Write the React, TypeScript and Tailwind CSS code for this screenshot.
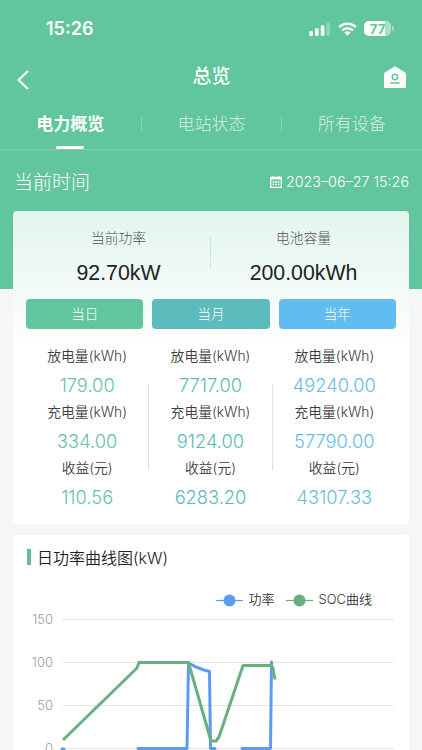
import React from "react";

const periods = [
  {
    label: "当日",
    button: "bg-[#61c59d]",
    text: "text-[#64c3a0]",
    rows: [
      { label: "放电量(kWh)", value: "179.00" },
      { label: "充电量(kWh)", value: "334.00" },
      { label: "收益(元)", value: "110.56" },
    ],
  },
  {
    label: "当月",
    button: "bg-[#5bbbbd]",
    text: "text-[#5bbcb6]",
    rows: [
      { label: "放电量(kWh)", value: "7717.00" },
      { label: "充电量(kWh)", value: "9124.00" },
      { label: "收益(元)", value: "6283.20" },
    ],
  },
  {
    label: "当年",
    button: "bg-[#61bcf0]",
    text: "text-[#6abbe4]",
    rows: [
      { label: "放电量(kWh)", value: "49240.00" },
      { label: "充电量(kWh)", value: "57790.00" },
      { label: "收益(元)", value: "43107.33" },
    ],
  },
];

export default function App() {
  return (
    <div className="h-[750px] w-[422px] overflow-hidden bg-[#f4f6f8] font-['Inter','Noto_Sans_CJK_SC',sans-serif]">
      <header className="h-[289px] bg-[#61c59d] text-white">
        <StatusBar />
        <NavBar />
        <Tabs />
        <div className="flex h-[64px] items-center justify-between pl-[14px] pr-[13px]">
          <span className="pt-[2px] text-[19px] font-light">当前时间</span>
          <div className="flex items-center gap-[4px]">
            <CalendarIcon />
            <span className="text-[14.3px] font-light">2023–06–27 15:26</span>
          </div>
        </div>
      </header>
      <main className="relative -mt-[78px] flex flex-col gap-[11px] px-[13px]">
        <OverviewCard />
        <PowerChartCard />
      </main>
    </div>
  );
}

function StatusBar() {
  return (
    <div className="flex h-[57px] items-center justify-between pl-[46px] pr-[28px]">
      <span className="text-[18px] font-semibold leading-[20px]">15:26</span>
      <div className="flex items-center">
        <svg width="22" height="14" viewBox="0 0 22 14" fill="currentColor">
          <rect x="0.3" y="9" width="3.6" height="5" rx="1.2" />
          <rect x="6" y="6.3" width="3.6" height="7.7" rx="1.2" />
          <rect x="11.8" y="3.3" width="3.6" height="10.7" rx="1.2" />
          <rect x="17.4" y="0.6" width="3.6" height="13.4" rx="1.2" opacity="0.3" />
        </svg>
        <svg className="ml-[7px]" width="19" height="14" viewBox="0 0 19 14">
          <g fill="none" stroke="currentColor" strokeWidth="2.5">
            <path d="M1.1 5.2a11.9 11.9 0 0 1 16.8 0" />
            <path d="M4.1 8.4a7.7 7.7 0 0 1 10.8 0" />
          </g>
          <path d="M9.5 13.8 6.4 10.6a4.5 4.5 0 0 1 6.2 0Z" fill="currentColor" />
        </svg>
        <div className="ml-[7px] flex items-center gap-[1px]">
          <div className="flex h-[15px] w-[27px] items-center justify-center rounded-[5px] bg-linear-to-r from-white from-78% to-white/45 to-78% pt-px text-[13px] leading-[14px] font-bold text-[#61c59d]">
            77
          </div>
          <div className="h-[5px] w-[2px] rounded-r-full bg-white/45" />
        </div>
      </div>
    </div>
  );
}

function NavBar() {
  return (
    <div className="flex h-[40px] items-center justify-between pl-[16px] pr-[15px]">
      <svg className="mt-[5px]" width="24" height="22" viewBox="0 0 24 22" fill="none" stroke="currentColor" strokeWidth="2">
        <path d="M12 2 2.5 11 12 20" />
      </svg>
      <h1 className="text-[19px] font-medium leading-[24px]">总览</h1>
      <svg className="-mt-px" width="24" height="24" viewBox="0 0 24 24">
        <path d="M12 1.2 22.2 7.6Q23 8.2 23 9V22Q23 23 22 23H2Q1 23 1 22V9Q1 8.2 1.8 7.6Z" fill="currentColor" />
        <circle cx="12" cy="12" r="2.7" fill="none" stroke="#61c59d" strokeWidth="1.5" />
        <path d="M7.5 18h9" stroke="#61c59d" strokeWidth="1.5" />
      </svg>
    </div>
  );
}

function Tabs() {
  return (
    <nav className="grid h-[53px] grid-cols-3 border-b border-white/20 text-[17px] leading-[54px]">
      <div className="flex flex-col items-center font-bold">
        <span className="h-[49px]">电力概览</span>
        <i className="h-[3px] w-[28px] shrink-0 rounded-full bg-white" />
      </div>
      <div className="-mr-px flex items-center justify-between font-light text-white/75">
        <i className="h-[14px] w-px bg-white/25" />
        <span>电站状态</span>
        <i className="h-[14px] w-px bg-white/25" />
      </div>
      <div className="text-center font-light text-white/75">所有设备</div>
    </nav>
  );
}

function CalendarIcon() {
  return (
    <svg width="12" height="12" viewBox="0 0 12 12" fill="none" stroke="currentColor">
      <path d="M0.7 1.5h10.6v9.8H0.7Z" strokeWidth="1.3" />
      <path d="M0.6 2.4h10.8" strokeWidth="2" />
      <path d="M3 0v2M9 0v2" strokeWidth="1" />
      <path d="M2.5 6h7M2.5 8.5h7" strokeWidth="1.6" strokeDasharray="1.7 0.9" />
    </svg>
  );
}

function OverviewCard() {
  return (
    <section className="h-[313px] rounded-[4px] bg-linear-to-b from-[#e2f5ee] to-white to-45% px-[13px]">
      <div className="flex h-[88px] items-center">
        <Capacity label="当前功率" value="92.70kW" />
        <i className="-mt-[4px] -ml-px h-[33px] w-px bg-[#cfe2ee]" />
        <Capacity label="电池容量" value="200.00kWh" />
      </div>
      <div className="grid grid-cols-3 gap-[9px]">
        {periods.map((period) => (
          <button key={period.label} className={`h-[30px] rounded-[4px] text-[13.5px] font-light text-white ${period.button}`}>
            {period.label}
          </button>
        ))}
      </div>
      <div className="grid grid-cols-3 pt-[13px]">
        {periods.map((period, i) => (
          <div key={period.label} className="flex items-center">
            <div className="flex-1 text-center">
              {period.rows.map((row) => (
                <div key={row.label} className="h-[56.2px]">
                  <div className="h-[28px] text-[13.8px] leading-[28px] font-[350] text-[#3c3c3c]">{row.label}</div>
                  <div className={`h-[28px] text-[18.3px] font-light leading-[31px] ${period.text}`}>{row.value}</div>
                </div>
              ))}
            </div>
            {i < 2 && <i className="mt-[2px] h-[86px] w-px bg-[#d9dfeb]" />}
          </div>
        ))}
      </div>
    </section>
  );
}

function Capacity({ label, value }: { label: string; value: string }) {
  return (
    <div className="flex-1 pt-[6px] text-center">
      <div className="text-[13.8px] leading-[26px] font-light text-[#555]">{label}</div>
      <div className="pt-[4px] font-['Liberation_Sans',sans-serif] text-[21.3px] leading-[36px] text-[#222]">{value}</div>
    </div>
  );
}

function PowerChartCard() {
  return (
    <section className="h-[300px] shrink-0 rounded-[4px] bg-white pt-[10px]">
      <h2 className="flex h-[24px] items-center gap-[6px] pl-[14px] text-[16px] font-[350] text-[#222]">
        <i className="h-[16px] w-[4px] bg-[#63bd9b]" />
        <span className="pt-[2px]">日功率曲线图(kW)</span>
      </h2>
      <div className="mt-[21px] flex h-[20px] items-center justify-end gap-[12px] pr-[37px] text-[13px] font-[350] text-[#333]">
        <LegendItem color="#5b9cf0" label="功率" />
        <LegendItem color="#66b17e" label="SOC曲线" />
      </div>
      <div className="flex">
        <div className="-mt-[12px] w-[41px] pr-px text-right text-[13px] font-light leading-[43px] text-[#999ca8]">
          <div>150</div>
          <div>100</div>
          <div>50</div>
          <div>0</div>
        </div>
        {/* y axis: 43px per 50 units */}
        <svg width="341" height="160" viewBox="54 610 341 160" fill="none">
          <path d="M62 619.5H394M62 662.5H394M62 705.5H394M62 748.5H394" stroke="#e3e5e8" />
          <path d="M62 749H64M138 748.5H187L188.5 663 196 667 204 670 209.5 671.5 210.5 748.5H215M242 748.5H270.5L271.5 662" stroke="#5b9cf0" strokeWidth="3" strokeLinejoin="round" strokeLinecap="round" />
          <path d="M63 740 137 668 139 662.5H188.5L211 741H216L219 737 243 665.5H271L273 668 273.5 672 275 679.5" stroke="#66b17e" strokeWidth="3" strokeLinejoin="round" />
        </svg>
      </div>
    </section>
  );
}

function LegendItem({ color, label }: { color: string; label: string }) {
  return (
    <div className="flex items-center gap-[5px]">
      <svg width="27" height="13" viewBox="0 0 27 13">
        <path d="M0 6.5h27" stroke={color} strokeWidth="1.2" />
        <circle cx="13.5" cy="6.5" r="6" fill={color} />
      </svg>
      <span>{label}</span>
    </div>
  );
}
